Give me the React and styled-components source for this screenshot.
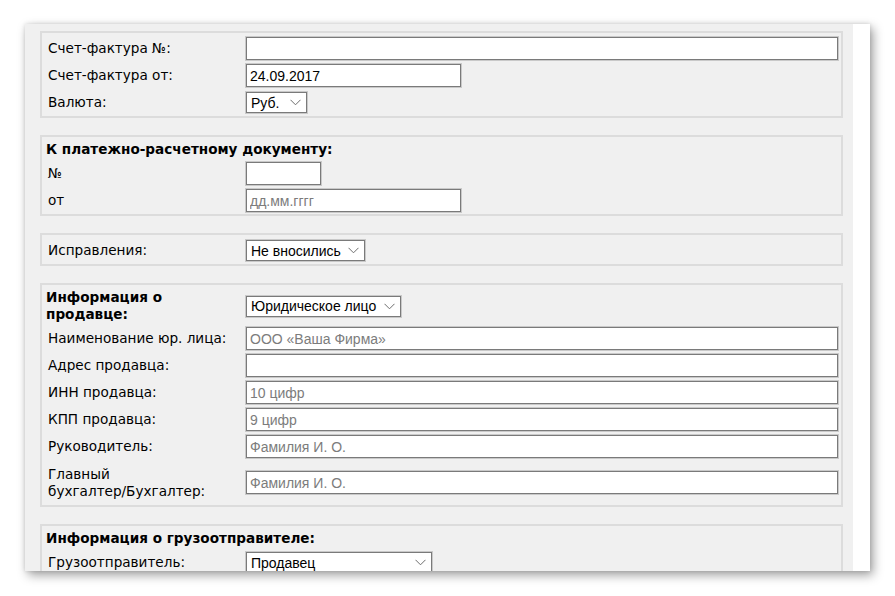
import React from 'react';
import styled, { createGlobalStyle } from 'styled-components';

const GlobalStyle = createGlobalStyle`
  html, body {
    margin: 0;
    padding: 0;
    background: #ffffff;
  }
`;

const Page = styled.div`
  width: 895px;
  height: 596px;
  padding: 24px 0 0 25px;
  box-sizing: border-box;
  overflow: hidden;
`;

const Window = styled.div`
  display: flex;
  width: 845px;
  height: 547px;
  overflow: hidden;
  box-shadow: 3px 4px 10px rgba(0, 0, 0, 0.38), 0 0 4px rgba(0, 0, 0, 0.12);
`;

const Content = styled.div`
  width: 828px;
  background: #f0f0f0;
  padding: 7px 10px 0 15px;
  box-sizing: border-box;
  display: flex;
  flex-direction: column;
  gap: 17px;
`;

const ScrollTrack = styled.div`
  width: 17px;
  background: #ffffff;
`;

const Section = styled.div`
  border: 2px solid #dcdcdc;
  padding: 4px 3px 2px 4px;
  display: grid;
  grid-template-columns: 200px 1fr;
  row-gap: 4px;
  font-family: 'DejaVu Sans', Verdana, sans-serif;
  font-size: 13.6px;
  color: #000;
  flex-shrink: 0;
`;

const Label = styled.div`
  display: flex;
  align-items: center;
  line-height: 17px;
  font-weight: ${p => (p.$bold ? 'bold' : 'normal')};
  padding: ${p => (p.$tall ? '4px 0 3px 2px' : p.$bold ? '0' : '0 0 0 2px')};
`;

const Heading = styled.div`
  grid-column: 1 / -1;
  font-weight: bold;
  line-height: 17px;
`;

const Cell = styled.div`
  display: flex;
  align-items: center;
  min-height: 23px;
`;

const TextInput = styled.input`
  width: ${p => p.$w || '592px'};
  height: 23px;
  box-sizing: border-box;
  border: 1px solid #7a7a7a;
  box-shadow: 0 0 0 1px #c9c9c9;
  margin: 0;
  padding: 0 3px;
  font-family: 'Liberation Sans', Arial, sans-serif;
  font-size: 14px;
  color: #000;
  background: #fff;
  outline: none;
  &::placeholder {
    color: #7c7c7c;
  }
`;

const SelectBox = styled.div`
  position: relative;
  width: ${p => p.$w};
  height: 21px;
  box-sizing: border-box;
  border: 1px solid #7a7a7a;
  box-shadow: 0 0 0 1px #c9c9c9;
  background: #fff;
  display: flex;
  align-items: center;
  padding-left: 4px;
  font-family: 'Liberation Sans', Arial, sans-serif;
  font-size: 14px;
  color: #000;
`;

const Chevron = styled.svg`
  position: absolute;
  right: 5px;
  top: 6px;
`;

const Select = ({ w, children }) => (
  <SelectBox $w={w}>
    {children}
    <Chevron width="11" height="7" viewBox="0 0 11 7">
      <path d="M0.5 0.8 L5.5 5.8 L10.5 0.8" fill="none" stroke="#6d6d6d" strokeWidth="1" />
    </Chevron>
  </SelectBox>
);

const Row = ({ label, children, bold, tall }) => (
  <>
    <Label $bold={bold} $tall={tall}>{label}</Label>
    <Cell>{children}</Cell>
  </>
);

export default function App() {
  return (
    <Page>
      <GlobalStyle />
      <Window>
        <Content>
          <Section>
            <Row label="Счет-фактура №:"><TextInput /></Row>
            <Row label="Счет-фактура от:"><TextInput $w="215px" defaultValue="24.09.2017" /></Row>
            <Row label="Валюта:"><Select w="61px">Руб.</Select></Row>
          </Section>

          <Section>
            <Heading>К платежно-расчетному документу:</Heading>
            <Row label="№"><TextInput $w="75px" /></Row>
            <Row label="от"><TextInput $w="215px" placeholder="дд.мм.гггг" /></Row>
          </Section>

          <Section>
            <Row label="Исправления:"><Select w="119px">Не вносились</Select></Row>
          </Section>

          <Section>
            <Row bold label={<span>Информация о<br />продавце:</span>}>
              <Select w="155px">Юридическое лицо</Select>
            </Row>
            <Row label="Наименование юр. лица:"><TextInput placeholder="ООО «Ваша Фирма»" /></Row>
            <Row label="Адрес продавца:"><TextInput /></Row>
            <Row label="ИНН продавца:"><TextInput placeholder="10 цифр" /></Row>
            <Row label="КПП продавца:"><TextInput placeholder="9 цифр" /></Row>
            <Row label="Руководитель:"><TextInput placeholder="Фамилия И. О." /></Row>
            <Row tall label={<span>Главный<br />бухгалтер/Бухгалтер:</span>}>
              <TextInput placeholder="Фамилия И. О." />
            </Row>
          </Section>

          <Section>
            <Heading>Информация о грузоотправителе:</Heading>
            <Row label="Грузоотправитель:"><Select w="186px">Продавец</Select></Row>
          </Section>
        </Content>
        <ScrollTrack />
      </Window>
    </Page>
  );
}
